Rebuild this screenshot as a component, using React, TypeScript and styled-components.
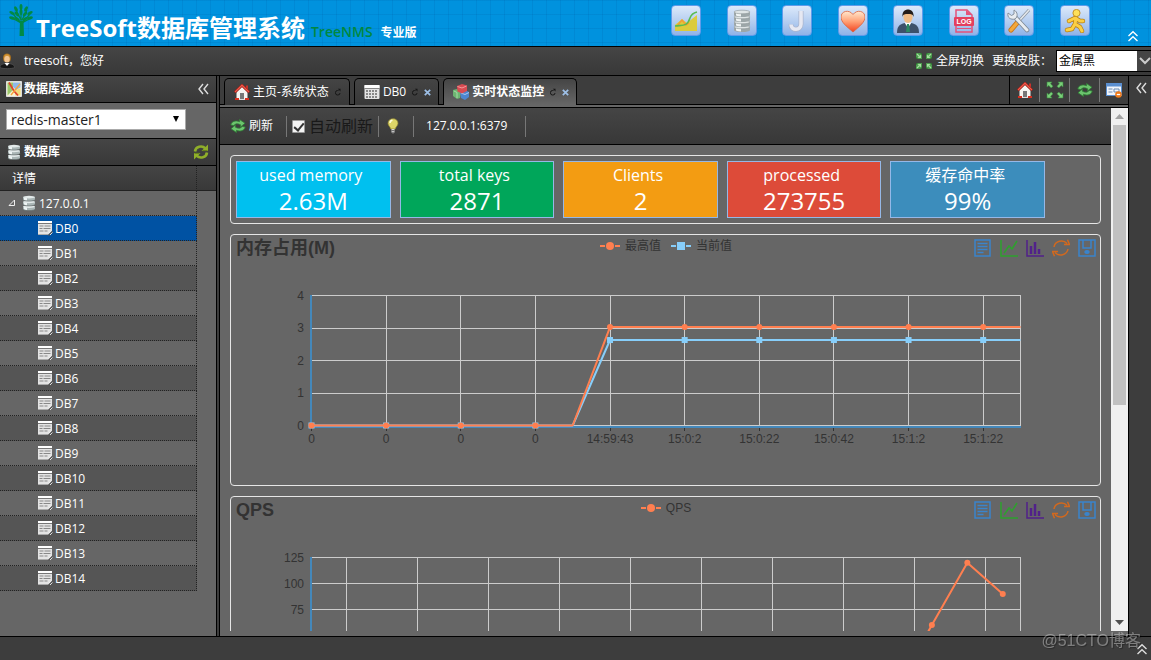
import React, { useState } from "react";
import styled, { createGlobalStyle, css } from "styled-components";

const line = "#000";
const chrome = "#3d3d3d";
const surface = "#666";
const barGradient = "linear-gradient(to bottom, #454545, #383838)";
const uiFont = '"Open Sans", "Noto Sans CJK SC", sans-serif';
const chartFont = '"Liberation Sans", "Noto Sans CJK SC", sans-serif';

const GlobalStyle = createGlobalStyle`
  * { box-sizing: border-box; }
  body {
    margin: 0;
    background: ${chrome};
    color: #fff;
    font: 12px/16px ${uiFont};
  }
  button, select, input { font: inherit; color: inherit; margin: 0; padding: 0; }
  button { border: 0; background: none; cursor: pointer; }
  svg { display: block; flex: none; }
`;

const Page = styled.div`
  display: flex;
  flex-direction: column;
  height: 100vh;
  overflow: hidden;
`;

/* ---------- top banner ---------- */

const Banner = styled.header`
  flex: none;
  display: flex;
  justify-content: space-between;
  height: 47px;
  border-bottom: 1px solid ${line};
  background:
    repeating-linear-gradient(to right, rgba(0, 60, 130, 0.1) 0 1px, transparent 1px 14px),
    repeating-linear-gradient(to bottom, rgba(0, 60, 130, 0.1) 0 1px, transparent 1px 14px),
    #0092de;
`;

const Brand = styled.div`
  display: flex;
  align-items: flex-end;
  padding: 0 0 2px 8px;
  white-space: nowrap;
`;

const TreeLogo = styled.svg`
  align-self: flex-start;
  margin-top: 4px;
`;

const Title = styled.h1`
  margin: 0;
  font-size: 24px;
  line-height: 32px;
  font-weight: 700;
`;

const Product = styled.span`
  margin-left: 6px;
  color: #00883f;
  font-size: 14px;
  line-height: 24px;
  font-weight: 600;
`;

const Edition = styled.span`
  margin-left: 8px;
  line-height: 22px;
  font-weight: 700;
`;

const BannerTools = styled.nav`
  display: flex;
  align-items: flex-start;
  justify-content: space-between;
  width: 480px;
  padding: 5px 12px 0 0;
`;

const Shortcuts = styled.div`
  display: flex;
  justify-content: space-between;
  width: 419px;
`;

const Shortcut = styled.button`
  display: grid;
  place-items: center;
  width: 30px;
  height: 31px;
  border: 1px solid #5f9bea;
  border-radius: 4px;
  background: linear-gradient(to bottom, #dce9fa, #b0caef 60%, #8fb3e8);
`;

const FoldUp = styled.button`
  align-self: flex-end;
  padding-bottom: 4px;
`;

/* ---------- user bar ---------- */

const UserBar = styled.div`
  flex: none;
  display: flex;
  align-items: center;
  justify-content: space-between;
  height: 29px;
  border-bottom: 1px solid ${line};
  background: ${barGradient};
  white-space: nowrap;
`;

const Greeting = styled.div`
  display: flex;
  align-items: center;
  gap: 8px;
`;

const UserTools = styled.div`
  display: flex;
  align-items: center;
  gap: 8px;
`;

const IconTextButton = styled.button`
  display: flex;
  align-items: center;
  gap: 3px;
`;

const SkinLabel = styled.label`
  display: flex;
  align-items: center;
  gap: 4px;
`;

const SkinSelect = styled.span`
  position: relative;
  display: flex;
  width: 95px;
  height: 22px;
  border: 1px solid ${line};
  border-right: 0;

  select {
    appearance: none;
    width: 100%;
    border: 0;
    border-radius: 0;
    padding: 0 2px;
    background: linear-gradient(to right, #fff 80px, #454545 80px);
    color: #000;
  }
  svg {
    position: absolute;
    right: 0;
    top: 6px;
    pointer-events: none;
  }
`;

/* ---------- body ---------- */

const Body = styled.div`
  flex: 1;
  min-height: 0;
  display: flex;
  border-bottom: 1px solid ${line};
`;

const Sidebar = styled.aside`
  flex: none;
  display: flex;
  flex-direction: column;
  width: 217px;
  margin-right: 2px;
  border-right: 1px solid ${line};
  background: ${surface};
`;

const PanelHeader = styled.h2`
  display: flex;
  align-items: center;
  gap: 2px;
  height: 27px;
  margin: 0;
  padding: 0 7px 0 6px;
  border-bottom: 1px solid ${line};
  background: ${barGradient};
  font-size: 12px;
  font-weight: 700;

  button { margin-left: auto; }
`;

const ConnectionArea = styled.div`
  height: 36px;
  padding: 6px;
  border-bottom: 1px solid ${line};
`;

const ConnectionSelect = styled.div`
  position: relative;
  width: 180px;

  select {
    appearance: none;
    display: block;
    width: 100%;
    height: 21px;
    padding: 0 4px;
    border: 1px solid #aaa;
    border-radius: 0;
    background: #fff;
    color: #222;
    font-size: 14px;
    line-height: 18px;
  }
  svg {
    position: absolute;
    right: 6px;
    top: 6px;
    pointer-events: none;
  }
`;

const TreeTable = styled.table`
  width: 100%;
  table-layout: fixed;
  border-collapse: separate;
  border-spacing: 0;
  text-align: left;

  thead { background: ${barGradient}; }
  th {
    height: 25px;
    padding: 1px 12px 0;
    border-bottom: 1px solid #222;
    font-weight: 400;
  }
  th:first-child { width: 197px; border-right: 1px dotted #222; }
`;

const TreeCell = styled.td<{ $depth: number; $striped?: boolean; $selected?: boolean }>`
  height: 25px;
  padding: 0 0 0 ${(p) => (p.$depth ? 37 : 8)}px;
  border-right: 1px dotted #222;
  border-bottom: 1px dotted #222;
  background: ${(p) => (p.$selected ? "#0052a3" : p.$striped ? "#555" : surface)};
`;

const TreeLabel = styled.span`
  display: flex;
  align-items: flex-end;
  gap: 2px;
  line-height: 15px;
`;

const Main = styled.main`
  flex: 1;
  min-width: 0;
  display: flex;
  flex-direction: column;
  border: solid ${line};
  border-width: 0 1px;
  background: ${surface};
`;

const TabStrip = styled.div`
  flex: none;
  display: flex;
  justify-content: space-between;
  height: 29px;
  border-bottom: 1px solid ${line};
  background: ${chrome};
`;

const TabList = styled.div`
  display: flex;
  gap: 4px;
  padding: 2px 0 0 4px;
`;

const Tab = styled.div<{ $active?: boolean }>`
  display: flex;
  align-items: center;
  gap: 5px;
  height: 27px;
  padding: 0 7px 0 9px;
  border: 1px solid ${line};
  border-bottom: 0;
  border-radius: 5px 5px 0 0;
  background: linear-gradient(to bottom, #444, #383838);
  white-space: nowrap;
  ${(p) =>
    p.$active &&
    css`
      background: linear-gradient(to bottom, #454545, ${surface});
      font-weight: 700;
    `}
`;

const TabButton = styled.button`
  display: flex;
  align-items: center;
  gap: 3px;
`;

const PageTools = styled.div`
  display: flex;
  align-items: center;
  border-left: 1px solid ${line};

  button {
    display: grid;
    place-items: center;
    width: 30px;
    height: 24px;
    border-right: 1px solid #777;
  }
  button:last-child { width: 28px; border-right: 0; }
`;

const Viewport = styled.div`
  flex: 1;
  min-height: 0;
  display: flex;
  margin: 2px 0 5px;
  border-top: 1px solid ${line};
`;

const Content = styled.div`
  flex: 1;
  min-width: 0;
  overflow-x: hidden;
  overflow-y: auto;
  scrollbar-width: none;
`;

const Toolbar = styled.div`
  display: flex;
  align-items: center;
  height: 37px;
  padding-left: 10px;
  border-bottom: 1px solid ${line};
  background: ${barGradient};
  white-space: nowrap;
`;

const ToolItem = styled.div<{ $pad: number; $end: number }>`
  display: flex;
  align-items: center;
  height: 21px;
  padding: 0 ${(p) => p.$end}px 0 ${(p) => p.$pad}px;
  border-right: 1px solid #777;
`;

const AutoRefresh = styled.label`
  display: flex;
  align-items: center;
  gap: 4px;
  color: #191919;
  font-size: 16px;
  line-height: 20px;

  input {
    appearance: none;
    position: relative;
    width: 13px;
    height: 13px;
    border: 1px solid #999;
    border-radius: 1px;
    background: #f4f4f4;
  }
  input:checked::after {
    content: "";
    position: absolute;
    left: 3px;
    top: 0;
    width: 4px;
    height: 8px;
    border: solid #333;
    border-width: 0 2px 2px 0;
    transform: rotate(40deg);
  }
`;

const Dashboard = styled.div`
  display: flex;
  flex-direction: column;
  gap: 10px;
  padding: 10px;
`;

const Box = styled.section`
  border: 1px solid #e6e6e6;
  border-radius: 4px;
`;

const StatRow = styled(Box)`
  display: grid;
  grid-template-columns: repeat(5, 18%);
  column-gap: 9px;
  padding: 5px;
`;

const Stat = styled.div<{ $color: string }>`
  height: 57px;
  padding-top: 1px;
  border: 1px solid #95b8e7;
  background: ${(p) => p.$color};
  text-align: center;
`;

const StatName = styled.div`
  padding-right: 5px;
  font-size: 16px;
  line-height: 24px;
`;

const StatValue = styled.div`
  font-size: 24px;
  line-height: 28px;
`;

const ChartHeader = styled.div`
  display: grid;
  grid-template-columns: 1fr auto 1fr;
  height: 30px;
  padding: 0 4px 0 5px;
  color: #333;
  font-family: ${chartFont};

  h3 {
    margin: 0;
    font-size: 18px;
    line-height: 26px;
  }
`;

const Legend = styled.div`
  display: flex;
  gap: 10px;
  height: 22px;
`;

const LegendItem = styled.span`
  display: flex;
  align-items: center;
  gap: 5px;
`;

const ChartTools = styled.div`
  display: flex;
  justify-content: flex-end;
  gap: 8px;
  padding-top: 4px;

  button { height: 18px; }
`;

const Plot = styled.svg`
  width: 100%;
  height: 220px;
  font-family: ${chartFont};
  font-size: 12px;
`;

const ScrollTrack = styled.div`
  flex: none;
  display: flex;
  flex-direction: column;
  align-items: center;
  justify-content: space-between;
  width: 17px;
  padding: 6px 0;
  background: #f0f0f0;
`;

const ScrollThumb = styled.div`
  width: 13px;
  height: 280px;
  margin: 6px 0 auto;
  background: #c1c1c1;
`;

const EastStrip = styled.aside`
  flex: none;
  width: 22px;
  padding-top: 6px;
  background: ${chrome};

  button { display: block; margin: 0 auto; padding: 0 0 0 2px; }
`;

const Footer = styled.footer`
  flex: none;
  display: flex;
  justify-content: flex-end;
  align-items: center;
  height: 23px;
  padding-right: 3px;
  background: ${chrome};
`;

const Watermark = styled.span`
  position: fixed;
  right: 10px;
  bottom: 8px;
  color: rgba(255, 255, 255, 0.36);
  font: 16px/22px ${chartFont};
  text-shadow: 1px 1px 1px rgba(0, 0, 0, 0.3);
`;

/* ---------- icons ---------- */

const Chevrons = ({ dir, color = "#ddd" }: { dir: "up" | "left"; color?: string }) => (
  <svg width="12" height="12" viewBox="0 0 12 12" fill="none" stroke={color} strokeWidth="1.4">
    <path d={dir === "up" ? "M1.5 6 6 1.8 10.500 6M1.500 11 6 6.800 10.500 11" : "M6 1 2 6l4 5M11 1 7 6l4 5"} />
  </svg>
);

const HomeIcon = () => (
  <svg width="16" height="16" viewBox="0 0 16 16">
    <path d="M12 1.500h2V6h-2z" fill="#c8332b" />
    <path d="M2.500 8v7h11V8L8 2.500z" fill="#f6f4f0" />
    <path d="M.8 8.300 8 1.300l7.200 7" fill="none" stroke="#9a1a12" strokeWidth="2.600" />
    <path d="M1 8 8 1.200 15 8" fill="none" stroke="#ee5a4c" strokeWidth="1.200" />
    <path d="M6 9h4v6H6z" fill="#777" />
    <path d="M1 14h4v2H1zM11 14h4v2h-4z" fill="#d8301f" />
    <path d="M5 15h6v1H5z" fill="#ddd" />
  </svg>
);

const TableIcon = () => (
  <svg width="16" height="16" viewBox="0 0 16 16">
    <rect x="0.500" y="1" width="15" height="14" rx="1" fill="#e4e4e4" />
    <rect x="0.500" y="1" width="15" height="3" fill="#fff" />
    <path d="M.5 4.500h15" stroke="#888" />
    <g fill="#888">
      {[6, 9, 12].map((y) => [2, 5, 8, 11].map((x) => <rect key={`${x}-${y}`} x={x} y={y} width="2" height="2" />))}
    </g>
  </svg>
);

const SheetIcon = () => (
  <svg width="16" height="16" viewBox="0 0 16 16">
    <path d="M1 1h14v10l-4 4H1z" fill="#e4e4e4" />
    <path d="M1 1h14v2H1z" fill="#fff" />
    <path d="M1 3.500h14" stroke="#777" />
    <path d="M2.500 6h4m1 0h6M2.500 8.500h3m1 0h7M2.500 11h4m1 0h3" stroke="#888" />
    <path d="M1 14.500h10" stroke="#aaa" />
    <path d="m10.500 15.500 5-5v2l-3 3z" fill="#555" />
    <path d="m12 13 2-2M13 15l2.500-2.500" stroke="#eee" strokeWidth="0.900" />
  </svg>
);

const CubesIcon = () => (
  <svg width="16" height="16" viewBox="0 0 16 16">
    <path d="M0 6l4-1 4 3-1 6-3 1-4-3z" fill="#6db572" />
    <path d="M1 7l3 1.500V14" fill="none" stroke="#a6dba4" />
    <path d="M7 8l5-2 4 2v5l-4 3-4-2z" fill="#4d86cf" />
    <path d="M8 9l4 1.500 4-2" fill="none" stroke="#a4c8f2" />
    <path d="M4 2l5-2 5 1.500V7L9 9.500 4.500 7.500z" fill="#d84b52" />
    <path d="M4.500 2.500 9 4l4.500-2" fill="none" stroke="#f29a9a" />
  </svg>
);

const DbGlyph = () => (
  <svg width="16" height="16" viewBox="0 0 16 16">
    {[10.5, 5.8, 1].map((y) => (
      <g key={y}>
        <path d={`M2 ${y + 1}v2.500c0 2 12 2 12 0V${y + 1}z`} fill="#a9b5b5" />
        <path d={`M3 ${y + 1.5}v2.200c1 .6 2 .8 3 .9V${y + 1.5}z`} fill="#eef4f4" />
        <ellipse cx="8" cy={y + 1.1} rx="6" ry="1.300" fill="#e3eaea" />
        <path d={`M2 ${y + 3.6}c0 2 12 2 12 0`} fill="none" stroke="#657070" strokeWidth="0.700" />
      </g>
    ))}
  </svg>
);

const MapIcon = () => (
  <svg width="16" height="16" viewBox="0 0 16 16">
    <path d="M.5.5h15v15H.5z" fill="#f7f3d8" />
    <path d="M1.500 1.500H7V9l-5.500 5.500z" fill="#9cc96d" />
    <path d="M7 1.500h7.500v5L10 9 7 6z" fill="#8fb8ea" />
    <path d="M10 9l4.500-2v7.500H9z" fill="#f2dd7d" />
    <path d="M3 1.500 8 10l4 4.500" fill="none" stroke="#e0452f" strokeWidth="1.800" />
    <path d="M14 3 5 14" fill="none" stroke="#f5a43a" strokeWidth="1.400" />
    <path d="M.5.5h15v15H.5z" fill="none" stroke="#ddd" />
  </svg>
);

const UserIcon = () => (
  <svg width="16" height="18" viewBox="0 0 16 18">
    <path d="M0 15.500c0-3 3-4 7-4s7.500 1 7.500 4c-2 1.500-12 1.500-14.500 0z" fill="#161616" stroke="#555" strokeWidth="0.700" />
    <path d="M4.500 11 7 14l2.500-3z" fill="#fff" />
    <path d="M3 5.500C3 0 11 0 11 5.500c0 2-.5 3-1 4H4c-.5-1-1-2-1-4z" fill="#a9701d" />
    <ellipse cx="7" cy="7" rx="2.800" ry="3.500" fill="#f2c591" />
    <path d="M3.800 5.500c1-2 5.400-2 6.400 0C10 1 4 1 3.800 5.500z" fill="#d39535" />
  </svg>
);

const RefreshIcon = () => (
  <svg width="16" height="16" viewBox="0 0 16 16" fill="#6cc56e" stroke="#2f7d35" strokeWidth="0.800" strokeLinejoin="round">
    <path d="M.8 7C1.300 3.300 6 2 9.500 3.700V1.500L15 5.200 10.500 9V6.700C7.500 5.200 5 5.700 3.800 7.600z" />
    <path d="M15.200 9c-.5 3.700-5.200 5-8.700 3.300v2.200L1 10.800 5.500 7v2.300c3 1.500 5.500 1 6.700-.9z" />
  </svg>
);

const SyncIcon = () => (
  <svg width="16" height="16" viewBox="0 0 16 16" fill="none" stroke="#8fae2a" strokeWidth="2.600">
    <path d="M2 7.500C2.500 2.500 9 1 12.500 4.500M14 8.500c-.5 5-7 6.500-10.500 3" />
    <path d="M15 .5V7H8.500zM1 15.500V9h6.500z" fill="#8fae2a" stroke="none" />
    <path d="M9.500 6.700h5M1.500 9.300h5" stroke="#5d7718" strokeWidth="1" />
  </svg>
);

const ExpandIcon = ({ inward }: { inward?: boolean }) => (
  <svg width="18" height="18" viewBox="0 0 18 18">
    {[0, 90, 180, 270].map((a) => (
      <g key={a} transform={`rotate(${a} 9 9)`}>
        {inward ? (
          <>
            <path d="M1 1h6v6H1z" fill="#4a9a4b" />
            <path d="M6 2.500V6H2.500z" fill="#a5dfa0" />
            <path d="m2 2 2.500 2.500" stroke="#a5dfa0" strokeWidth="1.200" />
            <path d="M5 1h2v2zM1 5v2h2z" fill="#2f6b33" />
          </>
        ) : (
          <path d="M1 1h5L4.600 2.800 7 5.200 5.200 7 2.800 4.600 1 6z" fill="#79cf78" stroke="#3b8a41" strokeWidth="0.600" />
        )}
      </g>
    ))}
  </svg>
);

const WindowIcon = () => (
  <svg width="16" height="16" viewBox="0 0 16 16">
    <rect x="0.500" y="1.500" width="15" height="12" fill="#f1f5fb" stroke="#5b8fd0" />
    <path d="M1 2h14v2.500H1z" fill="#5b8fd0" />
    <path d="M2.500 7h4M2.500 10h4M8 7h5v3H8z" fill="none" stroke="#6d8db5" />
    <circle cx="12.500" cy="12.500" r="3.300" fill="#ef7a1a" />
    <path d="M10.800 12.500h3.400" stroke="#fff" strokeWidth="1.300" />
  </svg>
);

const BulbIcon = () => (
  <svg width="12" height="16" viewBox="0 0 12 16">
    <path d="M6 .7c3 0 5 2 5 4.600 0 2.500-2.300 3.300-2.700 5.700H3.700C3.300 8.600 1 7.800 1 5.300 1 2.700 3 .7 6 .7z" fill="#ddd568" stroke="#8f8530" strokeWidth="0.700" />
    <path d="M3 5c0-1.500 1-2.500 2.500-2.700" fill="none" stroke="#fffde0" strokeWidth="1.400" />
    <path d="M4.500 11h3v3.500L6 15.500l-1.500-1z" fill="#d9d9d9" />
    <path d="M4.500 12.500h3M4.500 14.300h3" stroke="#555" strokeWidth="0.800" />
  </svg>
);

const ReloadMark = () => (
  <svg width="8" height="8" viewBox="0 0 8 8" fill="none" stroke="#161616">
    <path d="M4.500 2.500h-1a2 2 0 0 0-2 2v.500a2 2 0 0 0 2 2h.500a2 2 0 0 0 2-2" />
    <path d="M3.800.8h2.700v2.700z" fill="#161616" stroke="none" />
  </svg>
);

const CloseMark = () => (
  <svg width="7" height="7" viewBox="0 0 7 7" stroke="#9dbfe6" strokeWidth="1.700">
    <path d="m.8.8 5.400 5.400M6.200.8.8 6.200" />
  </svg>
);

const shortcutIcons: { label: string; art: React.ReactNode }[] = [
  {
    label: "监控",
    art: (
      <>
        <path d="M1 22v-6l7-6 5 4 10-8v16z" fill="#dccb3c" />
        <path d="M3 17l5-6 4 5 3-2" fill="none" stroke="#f59a35" strokeWidth="1.400" />
        <path d="M1 17c8-1 12 1 15-8 1-3 3-5 7-6" fill="none" stroke="#58bb52" strokeWidth="1.600" />
      </>
    ),
  },
  {
    label: "数据库",
    art: (
      <>
        {[16, 11, 6, 1].map((y) => (
          <g key={y}>
            <path d={`M4 ${y + 2}v3c0 2.800 16 2.800 16 0v-3z`} fill="#9da7a9" />
            <path d={`M6 ${y + 2}v3.500q2 1 5 1v-4.500z`} fill="#f0f4f4" />
            <ellipse cx="12" cy={y + 2} rx="8" ry="1.800" fill="#dfe5e6" stroke="#8a9496" strokeWidth="0.600" />
          </g>
        ))}
      </>
    ),
  },
  {
    label: "JSON",
    art: (
      <>
        <path d="M16 2v13c0 7-10 7-10 .5" fill="none" stroke="#aab4cc" strokeWidth="5" />
        <path d="M16 2v13c0 7-10 7-10 .5" fill="none" stroke="#e6e8f2" strokeWidth="3.600" />
      </>
    ),
  },
  {
    label: "收藏",
    art: (
      <>
        <defs>
          <linearGradient id="heart" x1="0" y1="0" x2="0" y2="1">
            <stop offset="0" stopColor="#ffe9d0" />
            <stop offset="0.500" stopColor="#ff9f74" />
            <stop offset="1" stopColor="#f2431f" />
          </linearGradient>
        </defs>
        <path d="M12 23C5 17 0 13 0 8c0-6 8-8 12-2.500C16 0 24 2 24 8c0 5-5 9-12 15z" fill="url(#heart)" stroke="#dd6038" strokeWidth="0.800" />
      </>
    ),
  },
  {
    label: "用户",
    art: (
      <>
        <path d="M1 24c0-6 2-9 8-10h6c6 1 8 4 8 10z" fill="#3d516b" />
        <path d="M8.500 13.500 12 19l3.500-5.500z" fill="#fff" />
        <path d="M11 15h2l1 8h-4z" fill="#2c8a62" />
        <ellipse cx="12" cy="8" rx="4.600" ry="6" fill="#f0bb85" />
        <path d="M6.500 8C5-2 19-2 17.500 8 17 5 15 5 12 5S7 5 6.500 8z" fill="#241d1a" />
      </>
    ),
  },
  {
    label: "日志",
    art: (
      <>
        <path d="M4 8V1h11l5 5v2M4 17v6h16v-6" fill="none" stroke="#e4527a" strokeWidth="1.500" />
        <path d="M14 1v5h6" fill="#e4527a" />
        <path d="M5 19.500h14" stroke="#e4527a" />
        <rect x="2" y="8" width="20" height="9" rx="1" fill="#e4405f" />
        <text x="12" y="15" textAnchor="middle" fontSize="7" fontWeight="700" fill="#fff" fontFamily="Liberation Sans, sans-serif">
          LOG
        </text>
      </>
    ),
  },
  {
    label: "设置",
    art: (
      <>
        <path d="M22 1 11 13" stroke="#8a95a2" strokeWidth="3" />
        <path d="M22 1 11 13" stroke="#e4e8ec" strokeWidth="1.600" />
        <path d="m10 14-6 7" stroke="#c9761a" strokeWidth="5" strokeLinecap="round" />
        <path d="m10 14-6 7" stroke="#f3a83c" strokeWidth="3.400" strokeLinecap="round" />
        <path d="m8 8 12 13" stroke="#7d8894" strokeWidth="4.600" strokeLinecap="round" />
        <path d="m8 8 12 13" stroke="#e8ecf0" strokeWidth="3" strokeLinecap="round" />
        <path d="M1 4c-1 5 3 7 7 6 3-2 3-7-1-9v4L4.500 6.500z" fill="#e8ecf0" stroke="#7d8894" strokeWidth="0.900" />
      </>
    ),
  },
  {
    label: "退出",
    art: (
      <>
        <g fill="none" stroke="#b97f12" strokeWidth="4.400" strokeLinecap="round" strokeLinejoin="round">
          <path d="m13 9-1 6 5 3 2 4M12 15l-3 5-5 1M6 12l6-3 5 3h3" />
        </g>
        <g fill="none" stroke="#fbcf44" strokeWidth="3" strokeLinecap="round" strokeLinejoin="round">
          <path d="m13 9-1 6 5 3 2 4M12 15l-3 5-5 1M6 12l6-3 5 3h3" />
        </g>
        <circle cx="13.500" cy="4" r="3.600" fill="#fde05a" stroke="#b97f12" strokeWidth="0.800" />
      </>
    ),
  },
];

const chartTools: { label: string; color: string; art: React.ReactNode }[] = [
  {
    label: "数据视图",
    color: "#3a84cc",
    art: <path d="M1 1h15v16H1zM3.500 4.500h10M3.500 7.500h10M3.500 10.500h10M3.500 13.500h6" />,
  },
  { label: "折线图", color: "#2ea12e", art: <path d="M1 1v16h17M4 14l5-7 3 3 5-8" /> },
  {
    label: "柱形图",
    color: "#51218a",
    art: (
      <>
        <path d="M1 1v16h17" />
        <path d="M5 15V7M9 15V3M13 15v-5" strokeWidth="2.500" />
      </>
    ),
  },
  {
    label: "还原",
    color: "#d2691e",
    art: <path d="M2 8c1-6 9-8 13-3.500M16 10c-1 6-9 8-13 3.500M12 5.500h5.500L15.500.8M6 12.500H.5l2 4.700" />,
  },
  {
    label: "保存为图片",
    color: "#3a84cc",
    art: (
      <>
        <path d="M1 1h16v16H1zM5 1v8h8V1" />
        <ellipse cx="9" cy="13" rx="2" ry="1.200" fill="#3a84cc" />
      </>
    ),
  },
];

/* ---------- charts ---------- */

const LEFT = 80;
const RIGHT = 789;
const TOP = 60;
const BOTTOM = 190;
const WIDTH = RIGHT - LEFT;
const ORANGE = "#ff7f50";
const BLUE = "#87cefa";

type Series = { name: string; color: string; square?: boolean; values: number[] };
type ChartProps = {
  title: string;
  max: number;
  ticks: number[];
  series: Series[];
  labels?: string[];
  banded?: boolean;
  markEvery: number;
};

const Symbol = ({ x, y, r, s }: { x: number; y: number; r: number; s: Series }) =>
  s.square ? (
    <rect x={x - r} y={y - r} width={r * 2} height={r * 2} fill={s.color} />
  ) : (
    <circle cx={x} cy={y} r={r} fill={s.color} />
  );

function Chart({ title, max, ticks, series, labels = [], banded, markEvery }: ChartProps) {
  const count = series[0].values.length;
  const step = banded ? WIDTH / count : WIDTH / (count - 1);
  const px = (i: number) => LEFT + 0.5 + (banded ? i + 0.5 : i) * step;
  const py = (v: number) => BOTTOM + 0.5 - (v / max) * (BOTTOM - TOP);
  const snap = (n: number) => Math.floor(n) + 0.5;
  const gridX = Array.from({ length: Math.floor(count / 2) }, (_, i) =>
    snap(LEFT + 0.5 + (banded ? i * 2 + 1 : i * 2) * step)
  );

  return (
    <Box>
      <ChartHeader>
        <h3>{title}</h3>
        <Legend>
          {series.map((s) => (
            <LegendItem key={s.name}>
              <svg width="20" height="10" viewBox="0 0 20 10">
                <path d="M0 5h5M15 5h5" stroke={s.color} strokeWidth="2" />
                <Symbol x={10} y={5} r={4} s={s} />
              </svg>
              {s.name}
            </LegendItem>
          ))}
        </Legend>
        <ChartTools>
          {chartTools.map((t) => (
            <button key={t.label} type="button" aria-label={t.label}>
              <svg width="18" height="18" viewBox="0 0 18 18" fill="none" stroke={t.color} strokeWidth="1.500">
                {t.art}
              </svg>
            </button>
          ))}
        </ChartTools>
      </ChartHeader>
      <Plot viewBox="0 30 869 220" role="img" aria-label={title}>
        <g stroke="#ccc" strokeWidth="1">
          {ticks.map((t) => (
            <line key={t} x1={LEFT} x2={RIGHT + 1} y1={snap(py(t))} y2={snap(py(t))} />
          ))}
          {gridX.map((x) => (
            <line key={x} x1={x} x2={x} y1={TOP} y2={BOTTOM} />
          ))}
          <line x1={RIGHT + 0.5} x2={RIGHT + 0.5} y1={TOP} y2={BOTTOM} />
        </g>
        <path d={`M${LEFT} ${TOP}V${BOTTOM + 2}M${LEFT - 1} ${BOTTOM + 2}H${RIGHT + 1}`} stroke="#4488bb" strokeWidth="2" />
        <g fill="#333">
          {ticks.map((t) => (
            <text key={t} x={LEFT - 7} y={py(t) + 4} textAnchor="end">
              {t}
            </text>
          ))}
          {labels.map((l, i) => (
            <text key={i} x={px(i * 2)} y={BOTTOM + 18} textAnchor="middle">
              {l}
            </text>
          ))}
        </g>
        <g stroke="#333">
          {gridX.map((x) => (
            <line key={x} x1={x} x2={x} y1={BOTTOM + 3} y2={BOTTOM + 6} />
          ))}
        </g>
        {[...series].reverse().map((s) => (
          <g key={s.name}>
            <polyline
              points={s.values.map((v, i) => `${px(i)},${py(v)}`).join(" ")}
              fill="none"
              stroke={s.color}
              strokeWidth="2"
              strokeLinejoin="bevel"
            />
            {s.values.map((v, i) =>
              i % markEvery === 0 ? <Symbol key={i} x={px(i)} y={py(v)} r={3} s={s} /> : null
            )}
          </g>
        ))}
      </Plot>
    </Box>
  );
}

const repeat = (zeros: number, value: number, n: number) => [...Array(zeros).fill(0), ...Array(n).fill(value)];

const stats = [
  { label: "used memory", value: "2.63M", color: "#00c0ef" },
  { label: "total keys", value: "2871", color: "#00a65a" },
  { label: "Clients", value: "2", color: "#f39c12" },
  { label: "processed", value: "273755", color: "#dd4b39" },
  { label: "缓存命中率", value: "99%", color: "#3c8dbc" },
];

const databases = Array.from({ length: 15 }, (_, i) => `DB${i}`);

const leaves = [
  [11, 2, 90], [6, 4, 60], [16, 4, 120], [2, 8, 30], [20, 8, 150], [7, 9, 50], [15, 9, 130],
  [11, 7, 90], [2, 13, 15], [20, 13, 165], [7, 14, 30], [15, 14, 150],
];

export default function App() {
  const [auto, setAuto] = useState(true);
  const [selected, setSelected] = useState("DB0");

  return (
    <Page>
      <GlobalStyle />
      <Banner>
        <Brand>
          <TreeLogo width="28" height="34" viewBox="0 0 28 34">
            <g fill="#008a45">
              {leaves.map(([x, y, a]) => (
                <ellipse key={`${x}-${y}`} cx={x + 2} cy={y + 1} rx="3" ry="1.500" transform={`rotate(${a} ${x + 2} ${y + 1})`} />
              ))}
            </g>
            <path d="M13 5v12M5 10l8 9M22 10l-8 9M8 6l5 10M19 6l-5 10M4 14l9 5M23 14l-9 5" stroke="#008a45" strokeWidth="1.200" />
            <path d="M12 17h3.500l.5 15h-4.500z" fill="#008a45" />
          </TreeLogo>
          <Title>TreeSoft数据库管理系统</Title>
          <Product>TreeNMS</Product>
          <Edition>专业版</Edition>
        </Brand>
        <BannerTools>
          <Shortcuts>
            {shortcutIcons.map((s) => (
              <Shortcut key={s.label} type="button" aria-label={s.label}>
                <svg width="24" height="24" viewBox="0 0 24 24" fill="none">
                  {s.art}
                </svg>
              </Shortcut>
            ))}
          </Shortcuts>
          <FoldUp type="button" aria-label="收起">
            <Chevrons dir="up" color="#fff" />
          </FoldUp>
        </BannerTools>
      </Banner>

      <UserBar>
        <Greeting>
          <UserIcon />
          <span>treesoft，您好</span>
        </Greeting>
        <UserTools>
          <IconTextButton type="button">
            <ExpandIcon inward />
            全屏切换
          </IconTextButton>
          <SkinLabel>
            更换皮肤：
            <SkinSelect>
              <select defaultValue="金属黑">
                <option>金属黑</option>
              </select>
              <svg width="12" height="8" viewBox="0 0 12 8" fill="none" stroke="#ccc" strokeWidth="2">
                <path d="m1 1 5 5 5-5" />
              </svg>
            </SkinSelect>
          </SkinLabel>
        </UserTools>
      </UserBar>

      <Body>
        <Sidebar>
          <PanelHeader>
            <MapIcon />
            数据库选择
            <button type="button" aria-label="折叠">
              <Chevrons dir="left" />
            </button>
          </PanelHeader>
          <ConnectionArea>
            <ConnectionSelect>
              <select aria-label="数据库选择" defaultValue="redis-master1">
                <option>redis-master1</option>
              </select>
              <svg width="8" height="8" viewBox="0 0 8 8">
                <path d="M1 1h6L4 7z" fill="#000" />
              </svg>
            </ConnectionSelect>
          </ConnectionArea>
          <PanelHeader>
            <DbGlyph />
            数据库
            <button type="button" aria-label="刷新数据库">
              <SyncIcon />
            </button>
          </PanelHeader>
          <TreeTable>
            <thead>
              <tr>
                <th>详情</th>
                <th />
              </tr>
            </thead>
            <tbody>
              <tr>
                <TreeCell $depth={0}>
                  <TreeLabel>
                    <svg width="11" height="13" viewBox="0 0 11 13" fill="none" stroke="#eee">
                      <path d="M1 7.500h5.500V2z" />
                    </svg>
                    <DbGlyph />
                    127.0.0.1
                  </TreeLabel>
                </TreeCell>
                <td />
              </tr>
              {databases.map((db, i) => (
                <tr key={db} onClick={() => setSelected(db)}>
                  <TreeCell $depth={1} $striped={i % 2 === 0} $selected={db === selected}>
                    <TreeLabel>
                      <SheetIcon />
                      {db}
                    </TreeLabel>
                  </TreeCell>
                  <td />
                </tr>
              ))}
            </tbody>
          </TreeTable>
        </Sidebar>

        <Main>
          <TabStrip>
            <TabList>
              <Tab>
                <TabButton type="button">
                  <HomeIcon />
                  主页-系统状态
                </TabButton>
                <ReloadMark />
              </Tab>
              <Tab>
                <TabButton type="button">
                  <TableIcon />
                  DB0
                </TabButton>
                <ReloadMark />
                <button type="button" aria-label="关闭 DB0">
                  <CloseMark />
                </button>
              </Tab>
              <Tab $active>
                <TabButton type="button">
                  <CubesIcon />
                  实时状态监控
                </TabButton>
                <ReloadMark />
                <button type="button" aria-label="关闭 实时状态监控">
                  <CloseMark />
                </button>
              </Tab>
            </TabList>
            <PageTools>
              <button type="button" aria-label="主页">
                <HomeIcon />
              </button>
              <button type="button" aria-label="全屏">
                <ExpandIcon />
              </button>
              <button type="button" aria-label="刷新标签">
                <RefreshIcon />
              </button>
              <button type="button" aria-label="关闭标签">
                <WindowIcon />
              </button>
            </PageTools>
          </TabStrip>

          <Viewport>
            <Content>
              <Toolbar>
                <ToolItem $pad={0} $end={13}>
                  <IconTextButton type="button">
                    <RefreshIcon />
                    刷新
                  </IconTextButton>
                </ToolItem>
                <ToolItem $pad={5} $end={5}>
                  <AutoRefresh>
                    <input type="checkbox" checked={auto} onChange={(e) => setAuto(e.target.checked)} />
                    自动刷新
                  </AutoRefresh>
                </ToolItem>
                <ToolItem $pad={8} $end={14}>
                  <button type="button" aria-label="提示">
                    <BulbIcon />
                  </button>
                </ToolItem>
                <ToolItem $pad={12} $end={18}>127.0.0.1:6379</ToolItem>
              </Toolbar>
              <Dashboard>
                <StatRow>
                  {stats.map((s) => (
                    <Stat key={s.label} $color={s.color}>
                      <StatName>{s.label}</StatName>
                      <StatValue>{s.value}</StatValue>
                    </Stat>
                  ))}
                </StatRow>
                <Chart
                  title="内存占用(M)"
                  max={4}
                  ticks={[0, 1, 2, 3, 4]}
                  markEvery={2}
                  labels={["0", "0", "0", "0", "14:59:43", "15:0:2", "15:0:22", "15:0:42", "15:1:2", "15:1:22"]}
                  series={[
                    { name: "最高值", color: ORANGE, values: repeat(8, 3.03, 12) },
                    { name: "当前值", color: BLUE, square: true, values: repeat(8, 2.63, 12) },
                  ]}
                />
                <Chart
                  title="QPS"
                  max={125}
                  ticks={[50, 75, 100, 125]}
                  markEvery={1}
                  banded
                  series={[{ name: "QPS", color: ORANGE, values: [...Array(17).fill(0), 60, 120, 90] }]}
                />
              </Dashboard>
            </Content>
            <ScrollTrack aria-hidden="true">
              <svg width="9" height="5" viewBox="0 0 9 5">
                <path d="M0 5h9L4.500 0z" fill="#a3a3a3" />
              </svg>
              <ScrollThumb />
              <svg width="9" height="5" viewBox="0 0 9 5">
                <path d="M0 0h9L4.500 5z" fill="#505050" />
              </svg>
            </ScrollTrack>
          </Viewport>
        </Main>

        <EastStrip>
          <button type="button" aria-label="展开右侧">
            <Chevrons dir="left" />
          </button>
        </EastStrip>
      </Body>

      <Footer>
        <button type="button" aria-label="展开底部">
          <Chevrons dir="up" />
        </button>
      </Footer>
      <Watermark>@51CTO博客</Watermark>
    </Page>
  );
}
